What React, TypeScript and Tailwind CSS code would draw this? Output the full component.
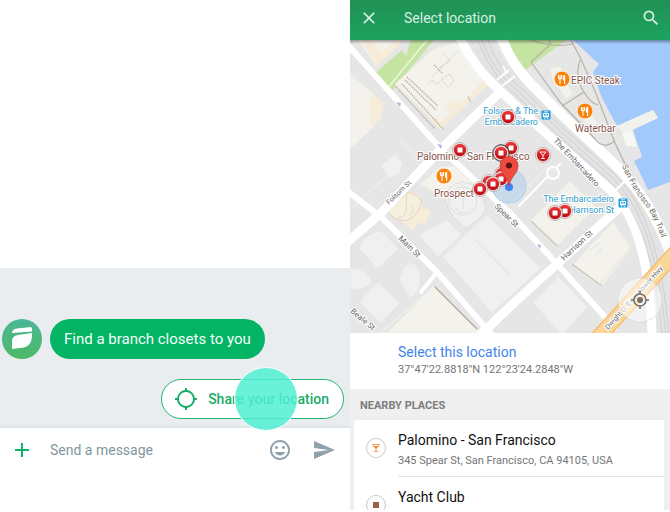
import type { ReactNode } from "react";
import {
  MdAdd,
  MdClose,
  MdGpsNotFixed,
  MdLocalBar,
  MdMood,
  MdSearch,
  MdSend,
} from "react-icons/md";

const STOPS: [number, number][] = [
  [508, 117],
  [460, 150],
  [511, 148],
  [501, 153],
  [502, 174],
  [501, 179],
  [489, 182],
  [493, 184],
  [480, 189],
  [565, 211],
  [555, 213],
];

function StopPin({ x, y }: { x: number; y: number }) {
  return (
    <g>
      <circle cx={x} cy={y} r="7.5" fill="#f6eeee" stroke="#a99c9c" strokeWidth="0.7" />
      <circle cx={x} cy={y} r="6.2" fill="url(#pinRed)" />
      <rect x={x - 2.5} y={y - 2.5} width="5" height="5" rx="0.6" fill="#fff" />
    </g>
  );
}

function FoodPin({ x, y }: { x: number; y: number }) {
  return (
    <g>
      <circle cx={x} cy={y} r="7.8" fill="#fb8008" stroke="#fff" strokeWidth="0.6" />
      <path
        d={`M${x - 2} ${y + 5}V${y - 4}M${x - 3.6} ${y - 4}v2.6q0 1.6 1.6 1.6t1.6-1.6v-2.6M${x + 2.6} ${y + 5}v-4`}
        fill="none"
        stroke="#fff"
        strokeWidth="1.1"
      />
      <path d={`M${x + 3.2} ${y + 1.4}h-2.4v-3q0-2 2.4-2.8z`} fill="#fff" />
    </g>
  );
}

function TransitIcon({ x, y }: { x: number; y: number }) {
  return (
    <g>
      <rect x={x - 4.5} y={y - 4.5} width="9" height="9" rx="1" fill="#1da1e0" />
      <rect x={x - 3} y={y - 2} width="6" height="4.5" rx="1" fill="#fff" />
      <path d={`M${x - 2} ${y - 3.2}h4M${x - 2} ${y + 3.4}h1M${x + 1} ${y + 3.4}h1`} stroke="#fff" strokeWidth="0.8" />
      <path d={`M${x - 2} ${y - 1}h1.6v1.5h-1.6zM${x + 0.4} ${y - 1}h1.6v1.5h-1.6z`} fill="#1da1e0" />
    </g>
  );
}

function Street({ x, y, angle, size = 8, children }: { x: number; y: number; angle: number; size?: number; children: ReactNode }) {
  return (
    <text
      transform={`translate(${x} ${y}) rotate(${angle})`}
      fontSize={size}
      fill="#666"
      stroke="#fff"
      strokeWidth="2"
      paintOrder="stroke"
    >
      {children}
    </text>
  );
}

function LocationMap() {
  return (
    <svg
      viewBox="350 40 320 293"
      preserveAspectRatio="xMidYMid slice"
      className="block h-[293px] w-full bg-[#e6e6e6] font-[Roboto,sans-serif]"
      role="img"
      aria-label="Map"
    >
      <defs>
        <linearGradient id="pinRed" x1="0" y1="0" x2="0" y2="1">
          <stop offset="0" stopColor="#ee3a3a" />
          <stop offset="1" stopColor="#b80c12" />
        </linearGradient>
        <linearGradient id="shade" x1="0" y1="0" x2="0" y2="1">
          <stop offset="0" stopColor="#000" stopOpacity="0.35" />
          <stop offset="1" stopColor="#000" stopOpacity="0" />
        </linearGradient>
        <path id="bayTrail" d="M622 166Q634 192 645 205T666 252" />
      </defs>

      {/* parks */}
      <g fill="#c5e4a2">
        <path d="M373 75L402 50L406 56L411 40H434L390 93Z" />
        <path d="M505 40H566L524 71Z" />
      </g>
      <path d="M427 40L387 89" stroke="#edf6dc" strokeWidth="1.5" />

      {/* water and piers */}
      <path d="M573 40L599 64L593 72L601 96L617 126L653 110L658 118L633 130L642 157L634 161L642 177L648 190L670 182V40Z" fill="#a1c9fb" />
      <path d="M617 126L653 110L658 118L624 133Z" fill="#f1f1ee" />
      <path d="M622 133L632 130L637 147L626 146Z" fill="#f7f7f4" />

      {/* buildings */}
      <g fill="#f4f2ec" stroke="#ebe6db" strokeWidth="0.7">
        <path d="M358 40H404L376 67Z" />
        <path d="M350 75L374 94L384 108L374 127L350 149Z" />
        <path d="M433 49L455 42L493 79L441 129L395 84Z" />
        <path d="M387 333L434 285L480 333Z" />
        <path d="M550 68L560 66L567 84L573 94L566 99L559 88L554 85Z" />
        <path d="M578 111L589 108L597 123L590 129Z" />
        <path d="M531 220L570 181L596 207L558 245Z" />
        <path d="M573 264L613 222L632 249L602 286Z" />
        <path d="M420 184L441 166L454 166L477 187L456 206Z" />
      </g>
      <g fill="#f6ecd8">
        <path d="M363 40H371L381 53L396 40H404L376 67Z" />
        <path d="M371 93L384 104L380 119L371 128L369 111Z" />
        <path d="M387 202L405 190L419 195L422 207L431 211L425 225L418 222L413 231L388 211Z" />
        <path d="M486 78L493 80L441 129L429 119L436 117L441 123L451 112L445 106L452 99L461 104Z" />
      </g>
      <path d="M385 205Q396 187 410 193Q423 197 421 204Q414 224 399 220Q389 217 385 205Z" fill="#f5efdf" stroke="#d9c9a9" strokeWidth="0.7" />
      <path d="M394 203L407 194L406 207Q408 216 398 218M412 205q5 5-3 11" fill="none" stroke="#ddd2b9" strokeWidth="0.8" />
      <path
        d="M396 87L435 129M402 84L443 129M405 80L436 110M407 77L438 106M434 65L442 73M468 97L471 102"
        fill="none"
        stroke="#b3aca0"
        strokeWidth="1.3"
        strokeDasharray="1.5 1"
      />
      <g fill="none" stroke="#b2a991" strokeWidth="1.2">
        <path d="M434 286L477 329" />
        <path d="M531 221L557 246M572 264L602 286" strokeWidth="0.8" />
      </g>
      <g fill="#f0f0f0" stroke="#e4e4e4" strokeWidth="0.8">
        <path d="M359 248L364 238L380 230L399 249L377 269Z" />
        <path d="M350 268Q367 268 372 282Q365 290 350 290Z" />
        <path d="M359 302L378 282L400 303L381 323Z" />
        <path d="M399 280Q403 263 412 263Q422 267 420 284Q417 298 409 297Z" />
        <path d="M443 257L488 215L541 268L492 313Z" />
        <path d="M418 235L447 220L462 235L438 257Z" />
        <path d="M533 303L558 276L588 307L564 333H560Z" />
        <path d="M380 165L396 154L403 164L400 173L390 179Z" />
      </g>
      <g fill="#f0f0f0" stroke="#dcdcdc" strokeWidth="0.9">
        <path d="M446 201Q445 184 463 182Q481 184 483 199L486 210L477 221L466 228Q450 218 446 201Z" />
        <circle cx="463" cy="201" r="14" />
        <path d="M455 193l8 6l8-5m-8 5v10m-8-1q8 10 16 0" fill="none" />
      </g>
      <path d="M443 52L450 61L439 68M428 83l5-3 2 4 5-2M441 80l8-6 5 7-6 6zM458 51L432 77" fill="none" stroke="#d9d3c7" strokeWidth="0.8" />
      <path
        d="M350 209L400 165M380 333L450 273M443 257L486 216M510 205L547 167M350 73L375 98M400 140L424 163"
        fill="none"
        stroke="#f4f4f4"
        strokeWidth="1"
      />
      <path
        d="M474 238L510 275M598 286L632 247M590 250l10-7m-4 13l6-9M564 251l8-6"
        fill="none"
        stroke="#d8d8d8"
        strokeWidth="0.7"
      />

      {/* local streets */}
      <g fill="none" stroke="#fff" strokeLinecap="round">
        <path d="M346 43L440 148L510 213L557 264L615 328" strokeWidth="6" />
        <path d="M346 190L381 217L437 272L492 335" strokeWidth="6" />
        <path d="M344 245L381 213L440 150L502 90" strokeWidth="9" />
        <path d="M478 337L516 301L557 264L619 208" strokeWidth="9" />
        <path d="M437 272L421 292" strokeWidth="4" />
        <path d="M519 206L551 173L560 164" strokeWidth="2" />
      </g>
      <circle cx="553" cy="173" r="6" fill="#e8e8e8" stroke="#fff" strokeWidth="1.8" />

      {/* waterfront boulevard with the rail line between its lanes */}
      <g fill="none">
        <path d="M480 34C488 60 500 76 519 92L558 129L609 175C640 203 658 250 666 336" stroke="#e3e3e3" strokeWidth="22" />
        <path d="M458 34C470 60 485 78 507 97L550 137L607 187C632 208 650 250 652 336" stroke="#fff" strokeWidth="9" />
        <path d="M500 34C506 50 512 63 530 83L567 120L610 160C640 188 658 215 678 274" stroke="#fff" strokeWidth="10" />
        <path
          d="M476 34C484 60 497 79 516 95L555 132L606 178C636 206 654 250 662 336M480 34C488 60 500 76 519 92L558 129L609 175C640 203 658 250 666 336M486 34C493 58 504 74 522 89L561 126L612 172C643 200 662 250 669 336"
          stroke="#cdcdcd"
          strokeWidth="0.9"
        />
        <path d="M503 66l4 8M497 80l12-10M502 86l13-10M616 190l9-9" stroke="#fff" strokeWidth="2" />
      </g>

      {/* footpaths */}
      <g fill="none" stroke="#b7b3a4" strokeWidth="1.2">
        <path d="M531 62L560 102L595 139Q603 150 615 141" />
        <path d="M571 40L581 59L597 96L615 143L625 164M531 40Q552 48 573 44M550 40l-2 6M531 62L552 43M580 60Q574 78 584 92Q590 103 598 105M562 106L584 92" />
      </g>

      {/* highway */}
      <path d="M596 340L676 252" stroke="#f6bd73" strokeWidth="16" />
      <path d="M596 340L676 252" stroke="#fbd699" strokeWidth="13" />

      <g fill="#b4b4dc">
        <path d="M396 102l5 1-1 4zM437 144l5 1-1 4zM537 244l4 1-1 4z" />
      </g>

      <Street x={553} y={141} angle={47}>The Embarcadero</Street>
      <Street x={389} y={205} angle={-44} size={7}>Folsom St</Street>
      <Street x={398} y={239} angle={44}>Main St</Street>
      <Street x={494} y={207} angle={44}>Spear St</Street>
      <Street x={564} y={261} angle={-43}>Harrison St</Street>
      <Street x={350} y={312} angle={40}>Beale St</Street>
      <Street x={608} y={330} angle={-48} size={7}>Dwight D. Eisenhower Hwy</Street>
      <text fontSize="8" fill="#6b6759" stroke="#fff" strokeWidth="1.6" paintOrder="stroke">
        <textPath href="#bayTrail">San Francisco Bay Trail</textPath>
      </text>

      <g stroke="#fff" strokeWidth="2" paintOrder="stroke">
        <g fill="#2d9ccb" fontSize="9">
          <text x="538" y="114" textAnchor="end">Folsom &amp; The</text>
          <text x="538" y="125" textAnchor="end">Embarcadero</text>
          <text x="614" y="202" textAnchor="end">The Embarcadero</text>
          <text x="614" y="213" textAnchor="end">Harrison St</text>
        </g>
        <g fill="#875349" fontSize="10">
          <text x="571" y="84">EPIC Steak</text>
          <text x="575" y="132">Waterbar</text>
          <text x="417" y="160">Palomino - San Francisco</text>
          <text x="434" y="197">Prospect</text>
        </g>
      </g>

      <TransitIcon x={546} y={115} />
      <TransitIcon x={623} y={203} />
      <FoodPin x={562} y={79} />
      <FoodPin x={585} y={111} />
      <FoodPin x={444} y={176} />

      <circle cx="509" cy="186" r="17" fill="#9bc9ea" fillOpacity="0.4" stroke="#a4c8e4" strokeWidth="0.8" />
      {STOPS.map(([x, y]) => (
        <StopPin key={`${x}-${y}`} x={x} y={y} />
      ))}
      <circle cx="501" cy="153" r="8.3" fill="none" stroke="#444" strokeWidth="1" />
      <circle cx="543" cy="155" r="7.5" fill="#f6eeee" stroke="#a99c9c" strokeWidth="0.7" />
      <circle cx="543" cy="155" r="6.2" fill="url(#pinRed)" />
      <path d="M540 152h6l-3 3.5zM543 155v3.5M541 158.5h4" fill="none" stroke="#fff" strokeWidth="0.9" />
      <circle cx="509" cy="187" r="4" fill="#3f83f3" />
      <path d="M509 186C508 177 500 174 500 165.500A9 9 0 0 1 518 165.500C518 174 510 177 509 186Z" fill="#ed4a40" stroke="#c73830" strokeWidth="0.8" />
      <circle cx="509" cy="165.500" r="3" fill="#5b1412" />

      <circle cx="640" cy="300" r="22" fill="#fff" fillOpacity="0.5" stroke="#d9d9d9" strokeOpacity="0.7" />
      <g stroke="#77716a" strokeWidth="1.6" fill="none">
        <circle cx="640" cy="300" r="6" />
        <path d="M640 291v3M640 306v3M631 300h3M646 300h3" />
      </g>
      <circle cx="640" cy="300" r="3" fill="#77716a" />

      <rect x="350" y="40" width="320" height="4" fill="url(#shade)" />
    </svg>
  );
}

function BotAvatar() {
  return (
    <svg viewBox="0 0 40 40" className="size-10 shrink-0" role="img" aria-label="Assistant">
      <defs>
        <linearGradient id="avatar" x1="0" y1="0" x2="0" y2="1">
          <stop offset="0" stopColor="#4bb797" />
          <stop offset="1" stopColor="#4cba66" />
        </linearGradient>
      </defs>
      <circle cx="20" cy="20" r="20" fill="url(#avatar)" />
      <path d="M10 14Q10 10 15 9.500L29 8Q31 10 30 12.500Z" fill="#fff" />
      <path d="M10 30V22Q10 17 16 16L30 14V18Q29 27 22 28.500Z" fill="#fff" />
    </svg>
  );
}

function Chat() {
  return (
    <section className="flex min-h-0 flex-col" aria-label="Chat">
      <div className="flex-1" />
      <div className="flex flex-col gap-5 border-b-2 border-[#dfe4e8] bg-[#e9edf0] px-0.5 pt-[51px] pb-[7px]">
        <div className="flex gap-2">
          <BotAvatar />
          <p className="flex h-10 items-center rounded-full bg-[#04b465] px-3.5 text-[15px] text-[#f2fff8]">
            Find a branch closets to you
          </p>
        </div>
        <div className="relative mr-1 flex items-center self-end">
          <button
            type="button"
            className="flex h-10 items-center gap-2.5 rounded-full border border-[#25b373] bg-white pr-3.5 pl-3 text-sm font-medium text-[#17ad69]"
          >
            <MdGpsNotFixed className="size-6" />
            Share your location
          </button>
          <span className="pointer-events-none absolute right-[46px] size-16 rounded-full border border-white bg-[#50f0d2]/85" />
        </div>
      </div>
      <form className="mb-[46px] flex h-9 items-center bg-white pt-2 pr-3.5 pl-2.5" onSubmit={(e) => e.preventDefault()}>
        <button type="button" aria-label="Add attachment" className="text-[#10b267]">
          <MdAdd className="size-6" />
        </button>
        <input
          aria-label="Message"
          placeholder="Send a message"
          className="ml-4 min-w-0 flex-1 text-sm outline-none placeholder:text-[#8296a0]"
        />
        <button type="button" aria-label="Emoji" className="mr-5 text-[#8fa2ab]">
          <MdMood className="size-6" />
        </button>
        <button type="submit" aria-label="Send" className="text-[#8fa2ab]">
          <MdSend className="size-6" />
        </button>
      </form>
    </section>
  );
}

function Place({ name, address, icon }: { name: string; address?: string; icon: ReactNode }) {
  return (
    <li className="flex pl-3">
      <span className="mt-[18px] mr-3 flex size-5 shrink-0 items-center justify-center rounded-full border border-[#c8c8c0]">
        {icon}
      </span>
      <div className="h-[57px] flex-1 border-b border-[#e2e2e2] pt-2.5">
        <p className="text-sm leading-5 text-[#111]">{name}</p>
        {address && <p className="text-[11px] leading-[22px] text-[#757575]">{address}</p>}
      </div>
    </li>
  );
}

function LocationPicker() {
  return (
    <section className="flex min-h-0 flex-col overflow-hidden bg-[#efefef]" aria-label="Location picker">
      <header className="flex h-10 shrink-0 items-center bg-gradient-to-b from-[#1f9154] to-[#1da35f] px-[9px] pb-1 text-[#d9efe3]">
        <button type="button" aria-label="Close">
          <MdClose className="size-5" />
        </button>
        <h1 className="ml-[25px] flex-1 text-sm">Select location</h1>
        <button type="button" aria-label="Search">
          <MdSearch className="size-5" />
        </button>
      </header>
      <div className="shrink-0">
        <LocationMap />
      </div>
      <div className="h-14 shrink-0 bg-white pt-2.5 pl-12">
        <button type="button" className="block text-sm leading-[18px] text-[#4285e8]">
          Select this location
        </button>
        <p className="text-[11px] leading-[18px] text-[#757575]">37°47'22.8818"N 122°23'24.2848"W</p>
      </div>
      <h2 className="h-[31px] shrink-0 px-2.5 pt-2 text-[11px] leading-[18px] font-bold text-[#7d7d7d]">NEARBY PLACES</h2>
      <ul className="mr-1.5 ml-1 bg-white">
        <Place
          name="Palomino - San Francisco"
          address="345 Spear St, San Francisco, CA 94105, USA"
          icon={<MdLocalBar className="size-2.5 text-[#f18b35]" />}
        />
        <Place name="Yacht Club" icon={<span className="size-1.5 bg-[#966544]" />} />
      </ul>
    </section>
  );
}

export default function App() {
  return (
    <main className="grid h-screen grid-cols-[35fr_32fr] grid-rows-[minmax(0,1fr)] bg-white pb-0.5 font-[Roboto,sans-serif]">
      <Chat />
      <LocationPicker />
    </main>
  );
}
